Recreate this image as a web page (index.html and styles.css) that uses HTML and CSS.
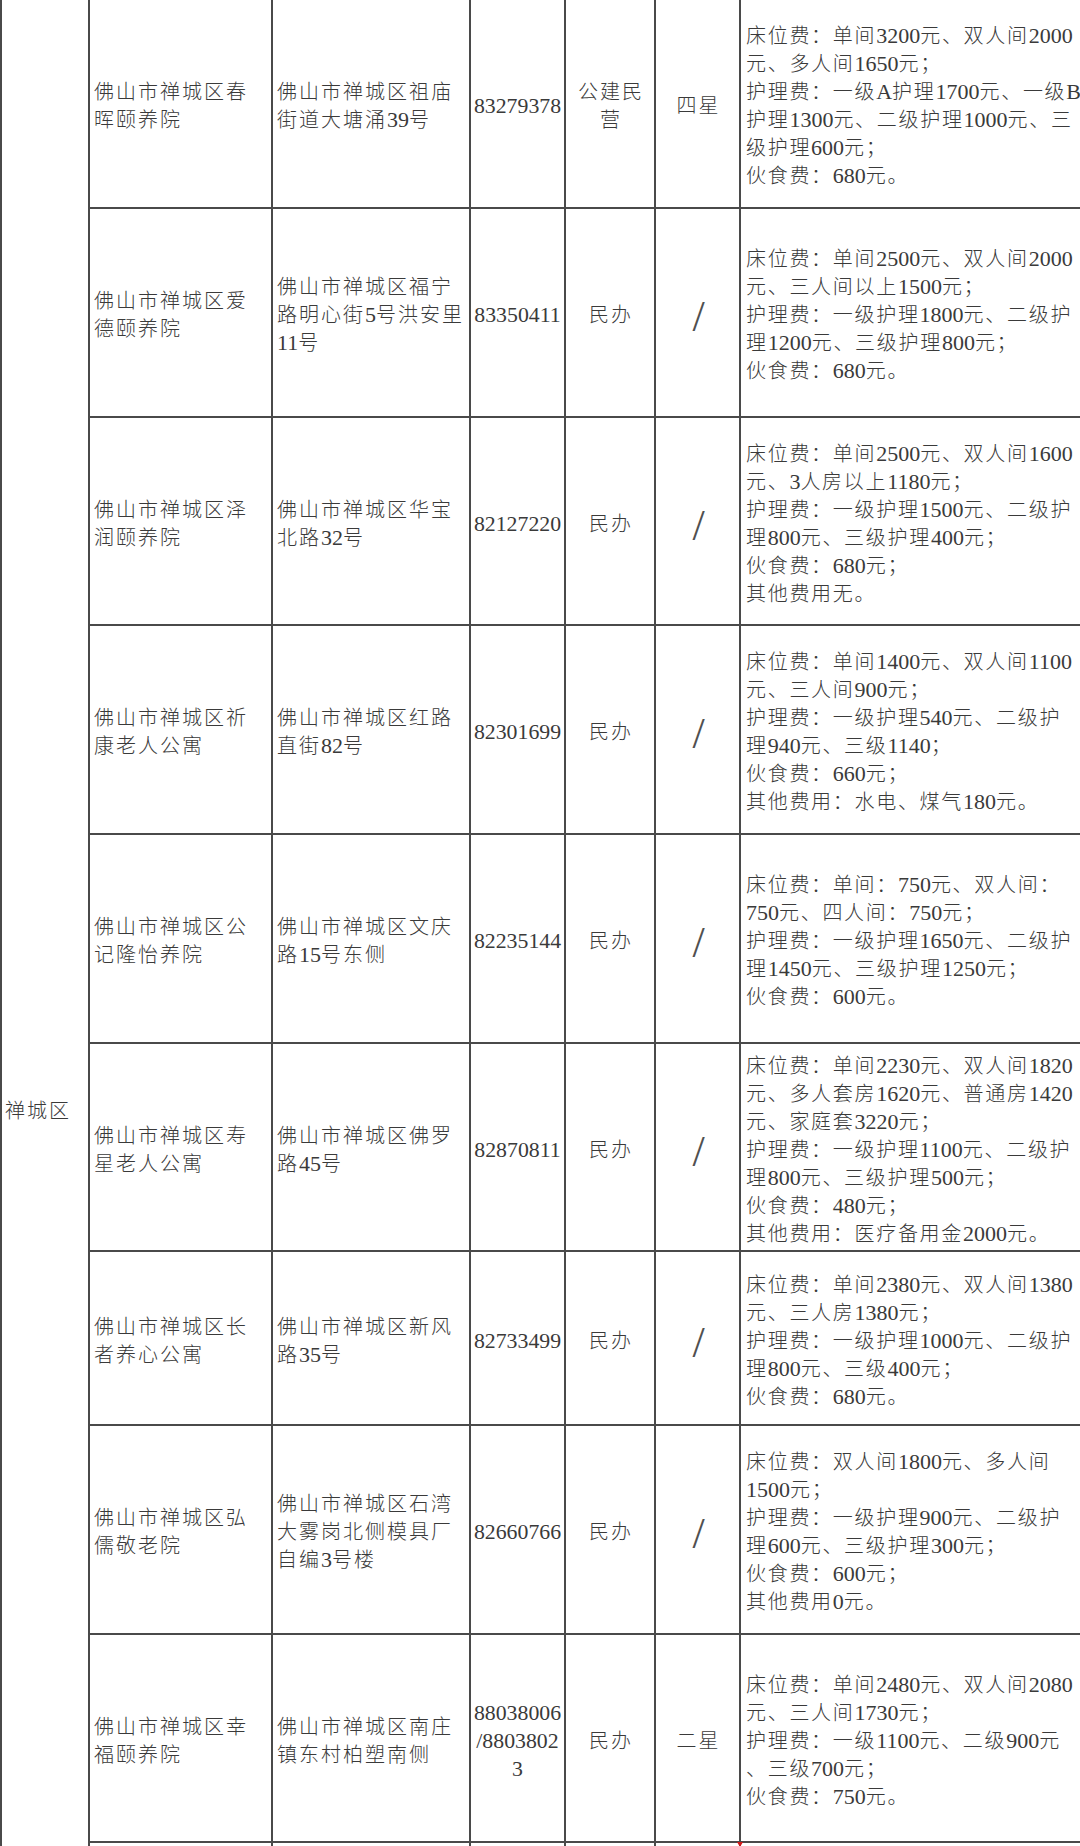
FILE: index.html
```html
<!DOCTYPE html>
<html lang="zh-CN">
<head>
<meta charset="utf-8">
<title>禅城区养老机构收费表</title>
<link rel="stylesheet" href="styles.css">
</head>
<body>
<table class="grid">
<colgroup>
<col class="c-dist"><col class="c-name"><col class="c-addr"><col class="c-tel"><col class="c-type"><col class="c-star"><col class="c-fee">
</colgroup>
<tbody>
<tr class="row">
<td class="dist" rowspan="10">禅城区</td>
<td class="name">佛山市禅城区春<br>晖颐养院</td>
<td class="addr">佛山市禅城区祖庙<br>街道大塘涌<span class="n">39</span>号</td>
<td class="tel">83279378</td>
<td class="type">公建民<br>营</td>
<td class="star">四星</td>
<td class="fee">床位费：单间<span class="n">3200</span>元、双人间<span class="n">2000</span><br>元、多人间<span class="n">1650</span>元；<br>护理费：一级<span class="n">A</span>护理<span class="n">1700</span>元、一级<span class="n">B</span><br>护理<span class="n">1300</span>元、二级护理<span class="n">1000</span>元、三<br>级护理<span class="n">600</span>元；<br>伙食费：<span class="n">680</span>元。</td>
</tr>
<tr class="row">
<td class="name">佛山市禅城区爱<br>德颐养院</td>
<td class="addr">佛山市禅城区福宁<br>路明心街<span class="n">5</span>号洪安里<br><span class="n">11</span>号</td>
<td class="tel">83350411</td>
<td class="type">民办</td>
<td class="star"><span class="slash">/</span></td>
<td class="fee">床位费：单间<span class="n">2500</span>元、双人间<span class="n">2000</span><br>元、三人间以上<span class="n">1500</span>元；<br>护理费：一级护理<span class="n">1800</span>元、二级护<br>理<span class="n">1200</span>元、三级护理<span class="n">800</span>元；<br>伙食费：<span class="n">680</span>元。</td>
</tr>
<tr class="row snug">
<td class="name">佛山市禅城区泽<br>润颐养院</td>
<td class="addr">佛山市禅城区华宝<br>北路<span class="n">32</span>号</td>
<td class="tel">82127220</td>
<td class="type">民办</td>
<td class="star"><span class="slash">/</span></td>
<td class="fee">床位费：单间<span class="n">2500</span>元、双人间<span class="n">1600</span><br>元、<span class="n">3</span>人房以上<span class="n">1180</span>元；<br>护理费：一级护理<span class="n">1500</span>元、二级护<br>理<span class="n">800</span>元、三级护理<span class="n">400</span>元；<br>伙食费：<span class="n">680</span>元；<br>其他费用无。</td>
</tr>
<tr class="row">
<td class="name">佛山市禅城区祈<br>康老人公寓</td>
<td class="addr">佛山市禅城区红路<br>直街<span class="n">82</span>号</td>
<td class="tel">82301699</td>
<td class="type">民办</td>
<td class="star"><span class="slash">/</span></td>
<td class="fee">床位费：单间<span class="n">1400</span>元、双人间<span class="n">1100</span><br>元、三人间<span class="n">900</span>元；<br>护理费：一级护理<span class="n">540</span>元、二级护<br>理<span class="n">940</span>元、三级<span class="n">1140</span>；<br>伙食费：<span class="n">660</span>元；<br>其他费用：水电、煤气<span class="n">180</span>元。</td>
</tr>
<tr class="row">
<td class="name">佛山市禅城区公<br>记隆怡养院</td>
<td class="addr">佛山市禅城区文庆<br>路<span class="n">15</span>号东侧</td>
<td class="tel">82235144</td>
<td class="type">民办</td>
<td class="star"><span class="slash">/</span></td>
<td class="fee">床位费：单间：<span class="n">750</span>元、双人间：<br><span class="n">750</span>元、四人间：<span class="n">750</span>元；<br>护理费：一级护理<span class="n">1650</span>元、二级护<br>理<span class="n">1450</span>元、三级护理<span class="n">1250</span>元；<br>伙食费：<span class="n">600</span>元。</td>
</tr>
<tr class="row snug">
<td class="name">佛山市禅城区寿<br>星老人公寓</td>
<td class="addr">佛山市禅城区佛罗<br>路<span class="n">45</span>号</td>
<td class="tel">82870811</td>
<td class="type">民办</td>
<td class="star"><span class="slash">/</span></td>
<td class="fee">床位费：单间<span class="n">2230</span>元、双人间<span class="n">1820</span><br>元、多人套房<span class="n">1620</span>元、普通房<span class="n">1420</span><br>元、家庭套<span class="n">3220</span>元；<br>护理费：一级护理<span class="n">1100</span>元、二级护<br>理<span class="n">800</span>元、三级护理<span class="n">500</span>元；<br>伙食费：<span class="n">480</span>元；<br>其他费用：医疗备用金<span class="n">2000</span>元。</td>
</tr>
<tr class="row short">
<td class="name">佛山市禅城区长<br>者养心公寓</td>
<td class="addr">佛山市禅城区新风<br>路<span class="n">35</span>号</td>
<td class="tel">82733499</td>
<td class="type">民办</td>
<td class="star"><span class="slash">/</span></td>
<td class="fee">床位费：单间<span class="n">2380</span>元、双人间<span class="n">1380</span><br>元、三人房<span class="n">1380</span>元；<br>护理费：一级护理<span class="n">1000</span>元、二级护<br>理<span class="n">800</span>元、三级<span class="n">400</span>元；<br>伙食费：<span class="n">680</span>元。</td>
</tr>
<tr class="row">
<td class="name">佛山市禅城区弘<br>儒敬老院</td>
<td class="addr">佛山市禅城区石湾<br>大雾岗北侧模具厂<br>自编<span class="n">3</span>号楼</td>
<td class="tel">82660766</td>
<td class="type">民办</td>
<td class="star"><span class="slash">/</span></td>
<td class="fee">床位费：双人间<span class="n">1800</span>元、多人间<br><span class="n">1500</span>元；<br>护理费：一级护理<span class="n">900</span>元、二级护<br>理<span class="n">600</span>元、三级护理<span class="n">300</span>元；<br>伙食费：<span class="n">600</span>元；<br>其他费用<span class="n">0</span>元。</td>
</tr>
<tr class="row snug">
<td class="name">佛山市禅城区幸<br>福颐养院</td>
<td class="addr">佛山市禅城区南庄<br>镇东村柏塑南侧</td>
<td class="tel">88038006<br>/8803802<br>3</td>
<td class="type">民办</td>
<td class="star">二星</td>
<td class="fee">床位费：单间<span class="n">2480</span>元、双人间<span class="n">2080</span><br>元、三人间<span class="n">1730</span>元；<br>护理费：一级<span class="n">1100</span>元、二级<span class="n">900</span>元<br>、三级<span class="n">700</span>元；<br>伙食费：<span class="n">750</span>元。</td>
</tr>
<tr class="tail">
<td class="name"></td>
<td class="addr"></td>
<td class="tel"></td>
<td class="type"></td>
<td class="star"></td>
<td class="fee"><span class="mark"></span></td>
</tr>
</tbody>
</table>
</body>
</html>
```

FILE: styles.css
```css
html, body {
  margin: 0;
  padding: 0;
  background: #ffffff;
}

body {
  width: 1080px;
  height: 1846px;
  overflow: hidden;
  font-family: "Liberation Serif", "Noto Sans CJK SC", serif;
  font-weight: 300;
  color: #3a3a3a;
}

.grid {
  border-collapse: collapse;
  table-layout: fixed;
  width: 1084px;
  margin-top: -2px;
  font-size: 20px;
  line-height: 28px;
  letter-spacing: 2px;
}

.c-dist { width: 88px; }
.c-name { width: 183px; }
.c-addr { width: 198px; }
.c-tel  { width: 95px; }
.c-type { width: 90px; }
.c-star { width: 85px; }
.c-fee  { width: 345px; }

.grid td {
  border: 2px solid #4a4a4a;
  padding: 5px 0 0 4px;
  vertical-align: middle;
  white-space: nowrap;
  overflow: hidden;
}

.row { height: 209px; }
.row.snug { height: 208px; }
.row.short { height: 174px; }
.tail { height: 40px; }

.grid td.dist {
  vertical-align: top;
  padding-top: 1097px;
  padding-left: 3px;
}

.n {
  font-size: 22px;
  letter-spacing: 0;
}

.grid td.tel {
  text-align: center;
  padding-left: 0;
  font-size: 21.8px;
  letter-spacing: 0;
}

.grid td.type,
.grid td.star {
  text-align: center;
  padding-left: 2px;
}

.slash {
  font-family: "Liberation Serif", serif;
  font-size: 44px;
  font-weight: 400;
  letter-spacing: 0;
  color: #505050;
  display: inline-block;
  line-height: 28px;
  vertical-align: top;
  margin-top: 4px;
}

.grid td.fee {
  padding-left: 5px;
  letter-spacing: 1.7px;
}

.grid td.fee .n {
  letter-spacing: 0;
}

.tail td.fee {
  position: relative;
  overflow: visible;
}

.mark {
  position: absolute;
  left: -4px;
  top: -1px;
  width: 0;
  height: 0;
  border-left: 3px solid transparent;
  border-right: 3px solid transparent;
  border-top: 5px solid #d01a1a;
}
```
